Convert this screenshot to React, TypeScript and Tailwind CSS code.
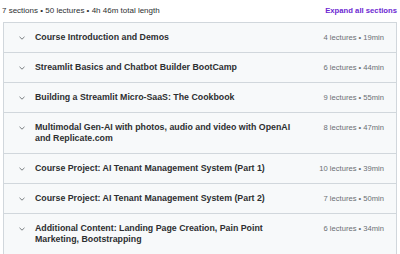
import { useState } from "react";

const SECTIONS = [
  { title: "Course Introduction and Demos", lectures: 4, length: "19min" },
  { title: "Streamlit Basics and Chatbot Builder BootCamp", lectures: 6, length: "44min" },
  { title: "Building a Streamlit Micro-SaaS: The Cookbook", lectures: 9, length: "55min" },
  {
    title: "Multimodal Gen-AI with photos, audio and video with OpenAI and Replicate.com",
    lectures: 8,
    length: "47min",
  },
  { title: "Course Project: AI Tenant Management System (Part 1)", lectures: 10, length: "39min" },
  { title: "Course Project: AI Tenant Management System (Part 2)", lectures: 7, length: "50min" },
  {
    title: "Additional Content: Landing Page Creation, Pain Point Marketing, Bootstrapping",
    lectures: 6,
    length: "34min",
  },
];

function Chevron() {
  return (
    <svg width="8" height="8" viewBox="0 0 8 8" className="shrink-0">
      <path d="M1.5 2.8 L4 5.2 L6.5 2.8" fill="none" stroke="#6a6f73" strokeWidth="0.9" />
    </svg>
  );
}

export default function App() {
  const [open, setOpen] = useState<number | null>(null);

  return (
    <div className="w-[400px] h-[254px] bg-white overflow-hidden font-['Liberation_Sans',Arial,sans-serif] text-[#2d2f31]">
      {/* Summary row */}
      <div className="h-[22px] flex items-center justify-between pl-[2px] pr-[3px]">
        <span className="text-[8px] text-[#2d2f31]">
          7 sections • 50 lectures • 4h 46m total length
        </span>
        <button className="text-[7.7px] font-bold text-[#6d28d2]">Expand all sections</button>
      </div>

      {/* Curriculum */}
      <div className="mx-[3px] border border-[#d1d7dc] border-b-0">
        {SECTIONS.map((s, i) => (
          <div
            key={s.title}
            onClick={() => setOpen(open === i ? null : i)}
            className="flex items-start bg-[#f7f9fa] border-b border-[#d1d7dc] py-[9px] pl-[14px] pr-[12px] cursor-pointer"
          >
            <div className="h-[11px] flex items-center mr-[9px]">
              <Chevron />
            </div>
            <div className="w-[268px] text-[8.8px] leading-[11px] font-bold">{s.title}</div>
            <div className="ml-auto h-[11px] flex items-center text-[7.6px] text-[#6a6f73] whitespace-nowrap">
              {s.lectures} lectures • {s.length}
            </div>
          </div>
        ))}
      </div>
    </div>
  );
}
